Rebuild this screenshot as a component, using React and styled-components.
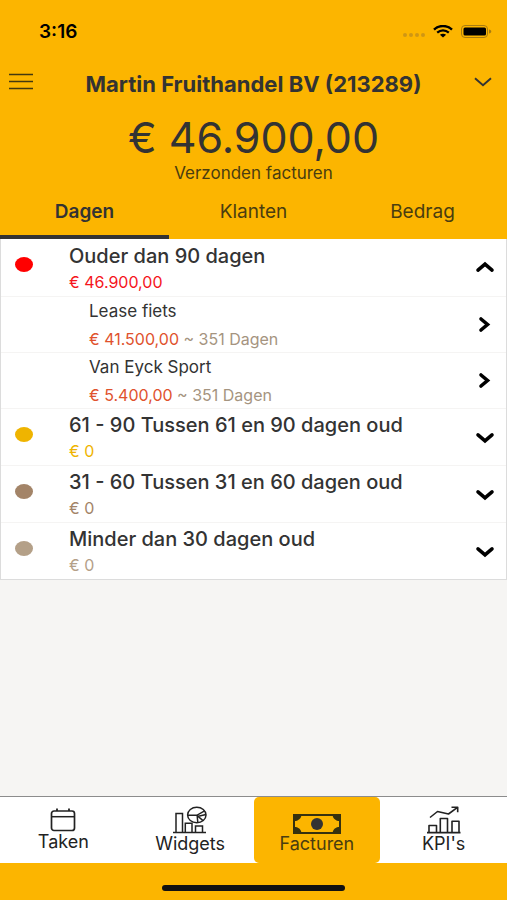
import React, { useState } from 'react'

import styled, { createGlobalStyle } from 'styled-components';

const GlobalStyle = createGlobalStyle`
* {
box-sizing: border-box;
}

body {
margin: 0;
background: #fcb500;
font-family: Inter, "Liberation Sans", sans-serif;
color: #333333;
}

button {
font-family: inherit;
color: inherit;
background: none;
border: 0;
padding: 0;
cursor: pointer;
}

svg {
display: block;
fill: none;
flex: none;
}
`;

const tabs = ['Dagen', 'Klanten', 'Bedrag']

const groups = [
    {
        name: 'Ouder dan 90 dagen',
        amount: '€ 46.900,00',
        color: '#ff0000',
        amountColor: '#f5151c',
        invoices: [
            { name: 'Lease fiets', amount: '€ 41.500,00', age: '351 Dagen' },
            { name: 'Van Eyck Sport', amount: '€ 5.400,00', age: '351 Dagen' },
        ],
    },
    { name: '61 - 90 Tussen 61 en 90 dagen oud', amount: '€ 0', color: '#efb400', amountColor: '#efb400', invoices: [] },
    { name: '31 - 60 Tussen 31 en 60 dagen oud', amount: '€ 0', color: '#a38468', amountColor: '#a38468', invoices: [] },
    { name: 'Minder dan 30 dagen oud', amount: '€ 0', color: '#b4a088', amountColor: '#b4a088', invoices: [] },
]

const WifiIcon = () => (
    <svg width="20" height="13" viewBox="0 0 20 13" aria-hidden="true">
        <path d="M1 4.6C6 -0.2 14 -0.2 19 4.6" stroke="#000" strokeWidth="2.4" />
        <path d="M4.2 7.6C7.6 4.5 12.4 4.5 15.8 7.6" stroke="#000" strokeWidth="2.2" />
        <path d="M10 12.4L6.9 9.8C8.7 8.3 11.3 8.3 13.1 9.8Z" fill="#000" />
    </svg>
)

const BatteryIcon = () => (
    <svg width="31" height="13" viewBox="0 0 31 13" aria-hidden="true">
        <rect x="0.5" y="0.5" width="26" height="12" rx="3.5" stroke="#a87c10" />
        <rect x="2.5" y="2.5" width="22.5" height="8" rx="1.5" fill="#000" />
        <path d="M28 4.5C31 5 31 8 28 8.5Z" fill="#a87c10" />
    </svg>
)

const MenuIcon = () => (
    <svg width="24" height="18" viewBox="0 0 24 18" aria-hidden="true">
        <path d="M0 1.5H24M0 8.5H24M0 15.5H24" stroke="#43390f" strokeWidth="1.6" />
    </svg>
)

const ThinChevron = () => (
    <svg width="18" height="10" viewBox="0 0 18 10" aria-hidden="true">
        <path d="M1 1.2L9 8.2L17 1.2" stroke="#333" strokeWidth="1.9" />
    </svg>
)

const chevrons = {
    up: 'M3 12.2L10 6.2L17 12.2',
    down: 'M3 6.8L10 12.8L17 6.8',
    right: 'M6 4L12.5 9.5L6 15',
}

const Chevron = ({ direction }) => (
    <svg width="20" height="19" viewBox="0 0 20 19" aria-hidden="true">
        <path d={chevrons[direction]} stroke="#000" strokeWidth="3.6" strokeLinecap="round" />
    </svg>
)

const CalendarIcon = () => (
    <svg width="26" height="24" viewBox="0 0 26 24" stroke="#222" aria-hidden="true">
        <rect x="1.5" y="3" width="23" height="19.5" rx="2.5" strokeWidth="1.7" />
        <path d="M1.5 8.7H24.5" strokeWidth="1.5" />
        <path d="M7 0.5V3M19 0.5V3" strokeWidth="1.8" />
    </svg>
)

const WidgetsIcon = () => (
    <svg width="34" height="28" viewBox="0 0 34 28" stroke="#222" strokeWidth="1.5" aria-hidden="true">
        <path d="M0 26.4H33" />
        <path d="M3 26V7.6H9.5V26M12.3 26V17.3H19V26M22.5 26V20H29.5V26" />
        <ellipse cx="23.8" cy="9" rx="9.2" ry="7.8" />
        <path d="M14.6 9.3H23.8L31.6 4.8M23.8 9.3L30 14.6M25.5 10.2L33 8.4M24.2 9.8L24.8 16.8" />
    </svg>
)

const MoneyIcon = () => (
    <svg width="48" height="28" viewBox="0 -9 48 28" aria-hidden="true">
        <rect x="1" y="0" width="46" height="18" stroke="#36310f" strokeWidth="2" />
        <circle cx="24" cy="9" r="6" fill="#333" />
        <path d="M1 0H8.5C8 3.5 5.5 6 1 6.2ZM47 0H39.5C40 3.5 42.5 6 47 6.2ZM1 18H8.5C8 14.5 5.5 12 1 11.8ZM47 18H39.5C40 14.5 42.5 12 47 11.8Z" fill="#36310f" />
    </svg>
)

const KpiIcon = () => (
    <svg width="34" height="28" viewBox="0 0 34 28" stroke="#222" strokeWidth="1.6" strokeLinejoin="round" aria-hidden="true">
        <path d="M0 26.6H33.5" />
        <path d="M2 26V19.5H9.5V26M13.3 26V12.5H20.5V26M25 26V15.2H32V26" />
        <path d="M3 11.5L10.5 5.5L21.5 8L30.5 1.4M24.5 1.2H30.7V6.2" />
    </svg>
)

const navItems = [
    { name: 'Taken', Icon: CalendarIcon },
    { name: 'Widgets', Icon: WidgetsIcon },
    { name: 'Facturen', Icon: MoneyIcon },
    { name: "KPI's", Icon: KpiIcon },
]

const App = () => {
    const [activeTab, setActiveTab] = useState('Dagen')
    const [activeNav, setActiveNav] = useState('Facturen')
    const [openGroup, setOpenGroup] = useState('Ouder dan 90 dagen')

    const toggleGroup = (name) => setOpenGroup(openGroup === name ? null : name)

    return (
        <Screen>
            <GlobalStyle />
            <StatusBar>
                <Clock>3:16</Clock>
                <StatusIcons>
                    <Signal><i /><i /><i /><i /></Signal>
                    <WifiIcon />
                    <BatteryIcon />
                </StatusIcons>
            </StatusBar>

            <Header>
                <TitleBar>
                    <button type="button" aria-label="Menu"><MenuIcon /></button>
                    <Title>Martin Fruithandel BV (213289)</Title>
                    <button type="button" aria-label="Kies bedrijf"><ThinChevron /></button>
                </TitleBar>
                <Total>€ 46.900,00</Total>
                <Caption>Verzonden facturen</Caption>
                <Tabs>
                    {tabs.map(tab => (
                        <Tab key={tab} type="button" $active={tab === activeTab} onClick={() => setActiveTab(tab)}>
                            {tab}
                        </Tab>
                    ))}
                </Tabs>
            </Header>

            <Content>
                <List>
                    {groups.map(group => (
                        <React.Fragment key={group.name}>
                            <Row type="button" aria-expanded={group.name === openGroup} onClick={() => toggleGroup(group.name)}>
                                <Dot $color={group.color} />
                                <RowText>
                                    <GroupName>{group.name}</GroupName>
                                    <Amount $color={group.amountColor}>{group.amount}</Amount>
                                </RowText>
                                <Chevron direction={group.name === openGroup ? 'up' : 'down'} />
                            </Row>
                            {group.name === openGroup && group.invoices.map(invoice => (
                                <Row key={invoice.name} type="button" $nested>
                                    <RowText $nested>
                                        <InvoiceName>{invoice.name}</InvoiceName>
                                        <Amount $color="#e0522d">
                                            {invoice.amount} <Age>~ {invoice.age}</Age>
                                        </Amount>
                                    </RowText>
                                    <Chevron direction="right" />
                                </Row>
                            ))}
                        </React.Fragment>
                    ))}
                </List>
            </Content>

            <BottomNav>
                {navItems.map(({ name, Icon }) => (
                    <NavItem key={name} type="button" $active={name === activeNav} onClick={() => setActiveNav(name)}>
                        <Icon />
                        {name}
                    </NavItem>
                ))}
            </BottomNav>
            <HomeArea>
                <HomeIndicator />
            </HomeArea>
        </Screen>
    )
}

const Screen = styled.div`
display: flex;
flex-direction: column;
min-height: 100vh;
`;

const StatusBar = styled.div`
display: flex;
align-items: center;
justify-content: space-between;
height: 62px;
padding: 0 15px 0 39px;
`;

const Clock = styled.span`
font-size: 19px;
font-weight: 600;
color: #000;
`;

const StatusIcons = styled.div`
display: flex;
align-items: center;
gap: 8px;
`;

const Signal = styled.span`
display: flex;
gap: 2px;
padding-top: 8px;

i {
width: 4px;
height: 4px;
border-radius: 50%;
background: #cf9614;
}
`;

const Header = styled.header`
display: flex;
flex-direction: column;
text-align: center;
`;

const TitleBar = styled.div`
display: flex;
align-items: center;
justify-content: space-between;
height: 40px;
padding: 0 15px 0 9px;
`;

const Title = styled.h1`
margin: 0;
padding-top: 4px;
font-size: 22px;
line-height: 24px;
font-weight: 700;
`;

const Total = styled.div`
padding-top: 9px;
font-size: 43px;
line-height: 52px;
`;

const Caption = styled.div`
font-size: 17px;
line-height: 20px;
color: #4a3d10;
`;

const Tabs = styled.div`
display: grid;
grid-template-columns: repeat(3, 1fr);
padding-top: 4px;
`;

const Tab = styled.button`
height: 52px;
border-bottom: 4px solid ${({ $active }) => $active ? '#333333' : 'transparent'};
font-size: 19px;
font-weight: ${({ $active }) => $active ? 600 : 400};
color: ${({ $active }) => $active ? '#333333' : '#4a3d10'};
`;

const Content = styled.main`
flex: 1;
background: #f6f5f3;
`;

const List = styled.div`
border: 1px solid #dcdcdc;
border-top: 0;
background: #fff;
`;

const Row = styled.button`
display: flex;
align-items: center;
width: 100%;
min-height: ${({ $nested }) => $nested ? 56 : 57}px;
padding: 0 11px 0 ${({ $nested }) => $nested ? 88 : 14}px;
text-align: left;

& + & {
border-top: 1px solid #f5f4f3;
}
`;

const Dot = styled.span`
width: 18px;
height: 15px;
margin: 0 36px 6px 0;
border-radius: 50%;
background: ${({ $color }) => $color};
`;

const RowText = styled.span`
display: flex;
flex-direction: column;
flex: 1;
gap: ${({ $nested }) => $nested ? 8 : 4}px;
`;

const GroupName = styled.span`
font-size: 20px;
line-height: 24px;
font-weight: 500;
`;

const InvoiceName = styled.span`
font-size: 17px;
line-height: 20px;
`;

const Amount = styled.span`
font-size: 16px;
line-height: 20px;
color: ${({ $color }) => $color};
`;

const Age = styled.span`
color: #a59480;
`;

const BottomNav = styled.nav`
display: grid;
grid-template-columns: repeat(4, 1fr);
height: 67px;
border-top: 1px solid #8c8c8c;
background: #fff;
`;

const NavItem = styled.button`
display: flex;
flex-direction: column;
align-items: center;
justify-content: center;
border-radius: 5px;
font-size: 18px;
line-height: 20px;
color: ${({ $active }) => $active ? '#4a3d10' : '#222222'};
background: ${({ $active }) => $active ? '#fcb500' : '#ffffff'};
`;

const HomeArea = styled.div`
display: flex;
align-items: center;
justify-content: center;
height: 37px;
padding-top: 12px;
`;

const HomeIndicator = styled.div`
width: 36%;
height: 6px;
border-radius: 3px;
background: #111;
`;

export default App
